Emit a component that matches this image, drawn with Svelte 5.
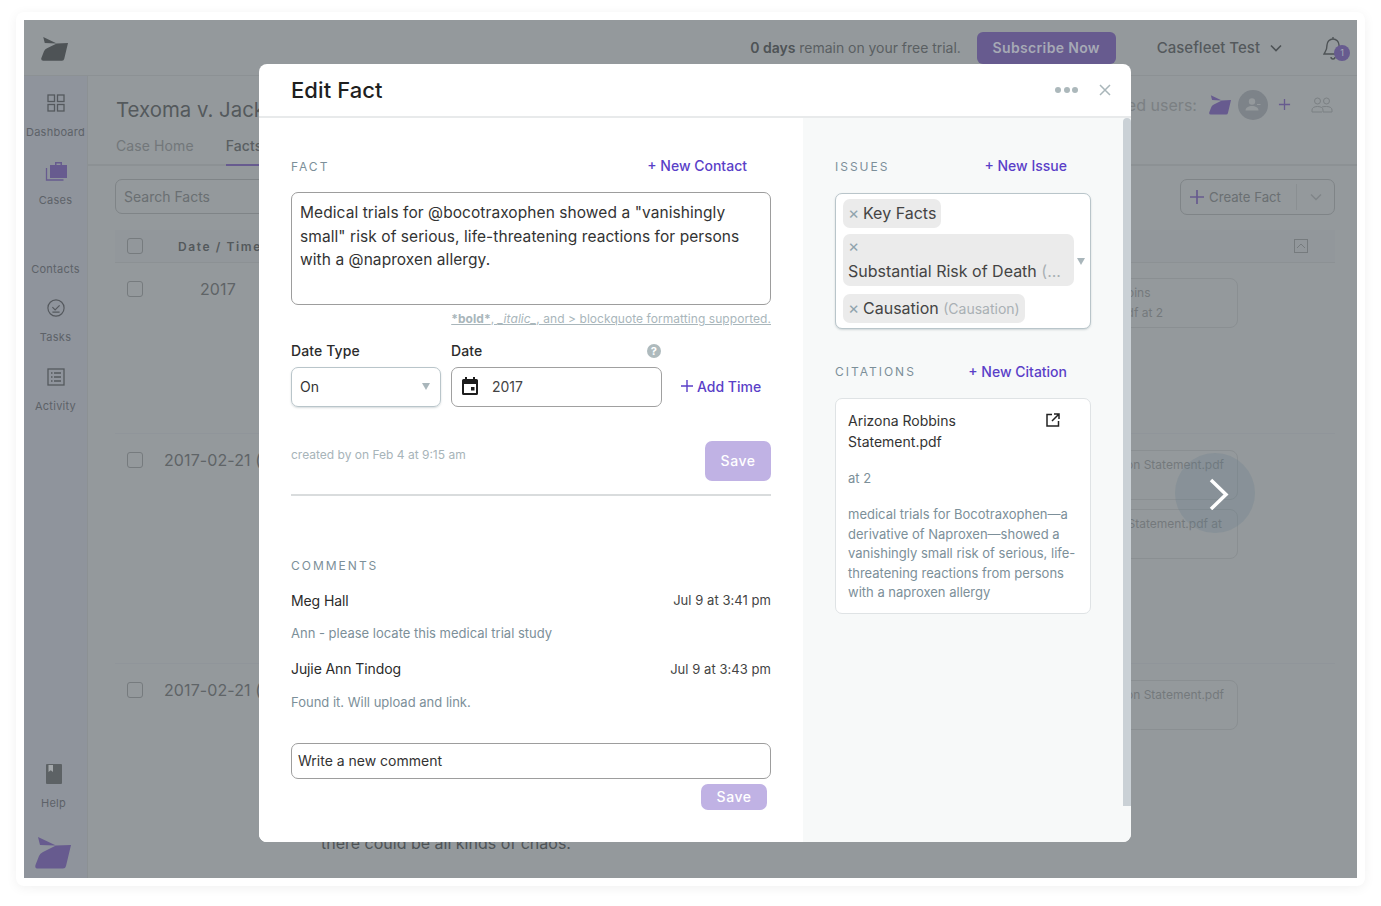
<script>
  const nav = [
    { label: 'Dashboard', icon: 'dash' },
    { label: 'Cases', icon: 'cases' },
    { label: 'Contacts', icon: 'none' },
    { label: 'Tasks', icon: 'tasks' },
    { label: 'Activity', icon: 'activity' }
  ];
  const rows = [
    { date: '2017', cls: 'r1', cards: [{ a: 'Arizona Robbins', b: 'Statement.pdf at 2' }] },
    { date: '2017-02-21 (', cls: 'r2', cards: [{ a: 'Jackson Statement.pdf', b: '' }, { a: 'Robbins Statement.pdf at', b: '' }] },
    { date: '2017-02-21 (', cls: 'r3', cards: [{ a: 'Jackson Statement.pdf', b: '' }] }
  ];
  const comments = [
    { who: 'Meg Hall', when: 'Jul 9 at 3:41 pm', text: 'Ann - please locate this medical trial study' },
    { who: 'Jujie Ann Tindog', when: 'Jul 9 at 3:43 pm', text: 'Found it. Will upload and link.' }
  ];
  const logo = 'M3 0 L21 8.500 L5 8 Z M21 8.500 L36 8 L31 29 Q30.500 31.500 28 31.500 H3 Q-.5 31.500 .5 28 L4 19 Q5 16.500 8 15 Z';
</script>

<div class="page">
  <div class="shell">
    <div class="frame">
      <header class="top">
        <svg class="toplogo" viewBox="0 0 36 32" aria-hidden="true"><path d={logo} /></svg>
        <div class="trial"><b>0 days</b> remain on your free trial.</div>
        <div class="subscribe">Subscribe Now</div>
        <div class="acct">Casefleet Test</div>
        <svg class="chev" viewBox="0 0 12 8" aria-hidden="true"><path d="M1 1.500 6 6.500 11 1.500" /></svg>
        <div class="bell">
          <svg viewBox="0 0 20 24" aria-hidden="true"><path d="M10 3a6 6 0 0 0-6 6c0 6-2 7-3 9h18c-1-2-3-3-3-9a6 6 0 0 0-6-6ZM10 1v2M8 21a2 2 0 0 0 4 0" /></svg>
          <span>1</span>
        </div>
      </header>
      <div class="under">
        <aside class="side">
          {#each nav as item}
            <div class="navitem">
              <div class="navicon">
                {#if item.icon === 'dash'}
                  <svg viewBox="0 0 18 18" aria-hidden="true" class="line"><rect x="1" y="1" width="6.500" height="6.500" /><rect x="10.500" y="1" width="6.500" height="6.500" /><rect x="1" y="10.500" width="6.500" height="6.500" /><rect x="10.500" y="10.500" width="6.500" height="6.500" /></svg>
                {:else if item.icon === 'cases'}
                  <svg viewBox="0 0 22 20" aria-hidden="true" class="case"><path d="M5 4h17v13H5z M10 4V1h7v3h-1.500V2.500h-4V4Z" /><path class="thin" d="M1.500 7v12h17" /></svg>
                {:else if item.icon === 'tasks'}
                  <svg viewBox="0 0 20 20" aria-hidden="true" class="line"><circle cx="10" cy="10" r="9" /><path d="M6 9l3 3 5-5M6 14.500h8" /></svg>
                {:else if item.icon === 'activity'}
                  <svg viewBox="0 0 18 18" aria-hidden="true" class="line"><rect x="1" y="1" width="16" height="16" /><path d="M4 5h1.500M7 5h7M4 9h1.500M7 9h7M4 13h1.500M7 13h7" /></svg>
                {/if}
              </div>
              <div class="navlabel">{item.label}</div>
            </div>
          {/each}
          <div class="spacer"></div>
          <div class="navitem help">
            <div class="navicon">
              <svg viewBox="0 0 16 20" aria-hidden="true"><path d="M1 0h14a1 1 0 0 1 1 1v18a1 1 0 0 1-1 1H1a1 1 0 0 1-1-1V1a1 1 0 0 1 1-1Z" fill="#5d6265" /><path d="M2.500 1h4.500v7L4.750 6.300 2.500 8Z" fill="#a3a7aa" /></svg>
            </div>
            <div class="navlabel">Help</div>
          </div>
          <svg class="sidelogo" viewBox="0 0 36 32" aria-hidden="true"><path d={logo} /></svg>
        </aside>
        <main class="content">
          <div class="casehead">
            <h1>Texoma v. Jackson</h1>
            <div class="shared">
              <span>Shared users:</span>
              <svg class="sharelogo" viewBox="0 0 36 32" aria-hidden="true"><path d={logo} /></svg>
              <div class="avatar">
                <svg viewBox="0 0 20 20" aria-hidden="true"><circle cx="9" cy="6.500" r="3.200" /><path d="M2.500 15.500c0-3 3-4.500 6.500-4.500s6.500 1.500 6.500 4.500Z" /><path d="M14 9h3.500v1H14Z" /></svg>
              </div>
              <svg class="shareplus" viewBox="0 0 14 14" aria-hidden="true"><path d="M7 1v12M1 7h12" /></svg>
              <svg class="shareusers" viewBox="0 0 22 16" aria-hidden="true"><circle cx="6.500" cy="4" r="3" /><circle cx="15.500" cy="4" r="3" /><path d="M1 15v-2c0-2 2-3.500 5.500-3.500S12 11 12 13v2M11 15h-10M11 10c1-.4 2.500-.5 4.500-.5 3.500 0 5.500 1.500 5.500 3.500v2H12" /></svg>
            </div>
          </div>
          <nav class="tabs">
            <span>Case Home</span>
            <span class="active">Facts</span>
          </nav>
          <div class="tools">
            <div class="search">Search Facts</div>
            <div class="create">
              <svg viewBox="0 0 14 14" aria-hidden="true"><path d="M7 0v14M0 7h14" /></svg>
              <span>Create Fact</span>
              <i></i>
              <svg class="cc" viewBox="0 0 12 8" aria-hidden="true"><path d="M1 1.500 6 6.500 11 1.500" /></svg>
            </div>
          </div>
          <div class="thead">
            <span class="check"></span>
            <span class="th">Date / Time</span>
            <svg class="collapse" viewBox="0 0 14 14" aria-hidden="true"><rect x=".5" y=".5" width="13" height="13" /><path d="M3 9l4-4 4 4" /></svg>
          </div>
          {#each rows as row}
            <div class="row {row.cls}">
              <span class="check"></span>
              <span class="date">{row.date}</span>
              <div class="cards">
                {#each row.cards as c}
                  <div class="refcard"><div>{c.a}</div><div>{c.b}</div></div>
                {/each}
              </div>
            </div>
          {/each}
          <div class="chaos">there could be all kinds of chaos.</div>
        </main>
      </div>
      <div class="nextbtn">
        <svg viewBox="0 0 20 32" aria-hidden="true"><path d="M2 2 17 16.500 2 31" /></svg>
      </div>
    </div>
  </div>

  <section class="modal">
    <div class="mhead">
      <h2>Edit Fact</h2>
      <div class="dots"><i></i><i></i><i></i></div>
      <svg class="close" viewBox="0 0 12 12" aria-hidden="true"><path d="M1 1l10 10M11 1 1 11" /></svg>
    </div>
    <div class="mbody">
      <div class="left">
        <div class="sechead"><span class="cap">FACT</span><span class="link">+ New Contact</span></div>
        <div class="factbox">Medical trials for @bocotraxophen showed a "vanishingly small" risk of serious, life-threatening reactions for persons with a @naproxen allergy.</div>
        <div class="hint"><b>*bold*</b>, <em>_italic_</em>, and &gt; blockquote formatting supported.</div>
        <div class="dategrid">
          <div class="lab">Date Type</div>
          <div class="lab datelab">Date <span class="q">?</span></div>
          <div></div>
          <div class="select">On<span class="tri"></span></div>
          <div class="dateinput">
            <svg viewBox="0 0 16 18" aria-hidden="true"><path fill-rule="evenodd" d="M3 0h2v2h6V0h2v2h1.500A1.500 1.500 0 0 1 16 3.500v13a1.500 1.500 0 0 1-1.500 1.500h-13A1.500 1.500 0 0 1 0 16.500v-13A1.500 1.500 0 0 1 1.500 2H3ZM2 7v9h12V7Zm7 3h3.500v3.500H9Z" /></svg>
            <span>2017</span>
          </div>
          <div class="addtime"><svg viewBox="0 0 12 12" aria-hidden="true"><path d="M6 0v12M0 6h12" /></svg>Add Time</div>
        </div>
        <div class="saverow">
          <span class="created">created by on Feb 4 at 9:15 am</span>
          <span class="save">Save</span>
        </div>
        <div class="divider"></div>
        <div class="cap comcap">COMMENTS</div>
        {#each comments as c}
          <div class="comment">
            <div class="chead"><span class="who">{c.who}</span><span class="when">{c.when}</span></div>
            <div class="ctext">{c.text}</div>
          </div>
        {/each}
        <div class="newcomment">Write a new comment</div>
        <div class="save2wrap"><span class="save2">Save</span></div>
      </div>
      <div class="right">
        <div class="sechead"><span class="cap">ISSUES</span><span class="link">+ New Issue</span></div>
        <div class="issues">
          <div class="tagcol">
            <div class="tag"><span class="x">×</span>Key Facts</div>
            <div class="tag tall"><span class="x">×</span><div class="tagline">Substantial Risk of Death <span class="muted">(...</span></div></div>
            <div class="tag third"><span class="x">×</span>Causation <span class="muted small">(Causation)</span></div>
          </div>
          <span class="tri issuetri"></span>
        </div>
        <div class="sechead cith"><span class="cap">CITATIONS</span><span class="link">+ New Citation</span></div>
        <div class="citation">
          <div class="citehead">
            <div class="citetitle">Arizona Robbins Statement.pdf</div>
            <svg viewBox="0 0 14 14" aria-hidden="true"><path d="M6 1.500H1v11.500h11.500V8M8 1h5v5M13 1 6 8" /></svg>
          </div>
          <div class="citeat">at 2</div>
          <div class="citetext">medical trials for Bocotraxophen—a derivative of Naproxen—showed a vanishingly small risk of serious, life-threatening reactions from persons with a naproxen allergy</div>
        </div>
      </div>
      <div class="scroll"></div>
    </div>
  </section>
</div>

<style>
  :global(body) { margin: 0; background: #fff; }
  .page { position: relative; width: 1381px; height: 906px; overflow: hidden; font-family: Inter, "Liberation Sans", sans-serif; background: #fff; }
  .shell { box-sizing: border-box; margin: 12px 16px 0; width: 1349px; height: 874px; padding: 8px; background: #fff; border-radius: 8px; box-shadow: 0 2px 12px rgba(0,0,0,.06); }
  .frame { position: relative; width: 1333px; height: 858px; background: #94999c; overflow: hidden; display: flex; flex-direction: column; color: #5a5f62; }
  .top { height: 55px; flex: none; display: flex; align-items: center; border-bottom: 1px solid #8c9194; padding-left: 17px; }
  .toplogo { width: 27px; height: 24px; fill: #4e5356; margin-top: 2px; }
  .trial { margin-left: auto; font-size: 14px; color: #5a5f62; letter-spacing: -.03px; }
  .trial b { font-weight: 600; color: #4e5356; }
  .subscribe { margin-left: 16px; width: 139px; height: 32px; line-height: 32px; text-align: center; background: #675b8f; color: #a6a9b5; border-radius: 6px; font-size: 14px; font-weight: 600; letter-spacing: .35px; }
  .acct { margin-left: 41px; font-size: 15px; font-weight: 500; color: #54595c; }
  .chev { width: 12px; height: 8px; margin-left: 10px; fill: none; stroke: #4e5356; stroke-width: 1.600; }
  .bell { position: relative; width: 20px; height: 24px; margin-left: 41px; margin-right: 14px; }
  .bell svg { width: 20px; height: 24px; fill: none; stroke: #4e5356; stroke-width: 1.400; }
  .bell span { position: absolute; left: 11px; top: 9px; width: 16px; height: 16px; border-radius: 50%; background: #675b8f; color: #a6a9b5; font-size: 9px; line-height: 16px; text-align: center; }
  .under { flex: 1; display: flex; min-height: 0; }
  .side { width: 63px; flex: none; background: #8f949c; border-right: 1px solid #8c9194; display: flex; flex-direction: column; align-items: center; padding-top: 16.500px; }
  .navitem { height: 68.500px; flex: none; display: flex; flex-direction: column; align-items: center; width: 100%; }
  .navicon { height: 20px; display: flex; align-items: center; justify-content: center; }
  .navicon svg { width: 18px; height: 18px; }
  .line { fill: none; stroke: #55595e; stroke-width: 1.300; }
  .case { width: 22px !important; height: 20px !important; fill: #675b8f; }
  .case .thin { fill: none; stroke: #675b8f; stroke-width: 1.300; }
  .navlabel { margin-top: 12px; font-size: 11px; line-height: 14px; letter-spacing: .25px; color: #5d6268; white-space: nowrap; }
  .spacer { flex: 1; }
  .help { height: auto; margin-bottom: 27px; margin-left: -4px; }
  .help .navicon svg { width: 16px; height: 20px; }
  .sidelogo { width: 36px; height: 32px; fill: #675b8f; margin: 0 0 9px -5px; flex: none; }
  .content { flex: 1; min-width: 0; position: relative; }
  .casehead { height: 55px; display: flex; align-items: center; justify-content: space-between; padding: 0 24px 0 28px; }
  .casehead h1 { margin: 0; font-size: 20.400px; font-weight: 400; color: #54595c; padding-top: 12px; }
  .shared { display: flex; align-items: center; padding-top: 2px; font-size: 16px; color: #7b8083; letter-spacing: .03px; }
  .sharelogo { width: 22px; height: 20px; fill: #675b8f; margin-left: 12px; }
  .avatar { width: 30px; height: 30px; border-radius: 50%; background: #7d8389; margin-left: 7px; margin-right: -1px; display: flex; align-items: center; justify-content: center; }
  .avatar svg { width: 20px; height: 20px; fill: #94999c; }
  .shareplus { width: 13px; height: 13px; margin-left: 11px; fill: none; stroke: #675b8f; stroke-width: 1.400; }
  .shareusers { width: 22px; height: 16px; margin-left: 20px; fill: none; stroke: #7b8083; stroke-width: 1; }
  .tabs { height: 33px; border-bottom: 2px solid #8c9194; display: flex; gap: 32px; padding-left: 28px; font-size: 14px; color: #72777a; letter-spacing: .1px; }
  .tabs span { height: 33px; line-height: 29px; }
  .tabs .active { color: #5a5f62; font-weight: 500; border-bottom: 2px solid #675b8f; }
  .tools { display: flex; justify-content: space-between; margin: 13px 22px 0 27px; }
  .search { width: 400px; height: 33px; line-height: 33px; padding-left: 8px; border: 1px solid #7f8487; border-radius: 7px; font-size: 14px; color: #6a6f72; }
  .create { width: 153px; height: 34px; border: 1px solid #7f8487; border-radius: 7px; display: flex; align-items: center; font-size: 13.200px; color: #6a6f72; }
  .create svg { width: 14px; height: 14px; margin-left: 9px; fill: none; stroke: #675b8f; stroke-width: 1.700; }
  .create span { margin-left: 5px; white-space: nowrap; }
  .create i { width: 1px; height: 26px; background: #8a8f92; margin-left: 15px; }
  .create .cc { width: 12px; height: 8px; margin-left: 13px; stroke: #7f8487; stroke-width: 1.300; }
  .thead { height: 32px; margin: 15px 22px 0 27px; background: #92979b; border-bottom: 1px solid #8c9194; display: flex; align-items: center; padding-left: 12px; position: relative; }
  .th { margin-left: 35px; font-size: 12px; font-weight: 600; letter-spacing: 1.600px; color: #54595c; }
  .collapse { position: absolute; right: 27px; top: 9px; width: 14px; height: 14px; fill: none; stroke: #767b7e; stroke-width: 1; }
  .check { width: 14px; height: 14px; border: 1px solid #767b7e; border-radius: 3px; flex: none; }
  .row { margin: 0 22px 0 27px; display: flex; align-items: flex-start; padding-left: 12px; position: relative; border-bottom: 1px solid #90959a; box-sizing: border-box; }
  .r1 { height: 171px; padding-top: 18px; }
  .r2 { height: 230px; padding-top: 18px; }
  .r3 { height: 160px; padding-top: 18px; border-bottom: 0; }
  .r1 .date { margin-left: 57px; }
  .date { margin-left: 21px; font-size: 16px; line-height: 20px; color: #5f6467; white-space: nowrap; margin-top: -2px; letter-spacing: .1px; }
  .cards { position: absolute; left: 929px; width: 194px; top: 16px; display: flex; flex-direction: column; gap: 9px; }
  .r1 .cards { top: 15px; }
  .refcard { box-sizing: border-box; height: 50px; border: 1px solid #8a8f92; border-radius: 8px; padding: 4px 13px 0; font-size: 12px; line-height: 20px; color: #74797c; white-space: nowrap; }
  .r2 .refcard, .r3 .refcard { text-align: right; }
  .r2 .refcard + .refcard { padding-right: 15px; }
  .chaos { position: absolute; left: 233px; top: 757px; font-size: 16px; color: #4e5356; }
  .nextbtn { position: absolute; left: 1151px; top: 433px; width: 80px; height: 80px; border-radius: 50%; background: rgba(100,125,140,.25); display: flex; align-items: center; justify-content: center; }
  .nextbtn svg { width: 20px; height: 32px; fill: none; stroke: #fff; stroke-width: 3.500; margin-left: 7px; margin-top: 1px; }

  .modal { position: absolute; left: 259px; top: 64px; width: 872px; height: 778px; background: #fff; border-radius: 8px; overflow: hidden; display: flex; flex-direction: column; color: #2d2d2d; }
  .mhead { height: 52px; flex: none; display: flex; align-items: center; padding: 0 20px 0 32px; border-bottom: 2px solid #e8eaeb; }
  .mhead h2 { margin: 0; font-size: 22px; font-weight: 500; color: #1f1f1f; letter-spacing: .08px; }
  .dots { margin-left: auto; display: flex; gap: 2.500px; }
  .dots i { width: 6px; height: 6px; border-radius: 50%; background: #acb8bb; }
  .close { width: 12px; height: 12px; margin-left: 21px; fill: none; stroke: #a9b6ba; stroke-width: 1.500; }
  .mbody { flex: 1; display: flex; min-height: 0; background: #f7f9f9; }
  .left { width: 480px; flex: none; padding: 0 32px; background: #fff; }
  .right { width: 256px; flex: none; background: #f7f9f9; padding: 0 32px; }
  .scroll { flex: none; width: 8px; background: #cad1d6; border-radius: 4px 4px 0 0; height: 688px; }
  .sechead { display: flex; justify-content: space-between; align-items: center; height: 20px; margin-top: 37px; padding-right: 24px; }
  .cap { font-size: 12px; letter-spacing: 2px; color: #7c8f99; margin-top: 2px; }
  .cith .cap { margin-top: 0; }
  .link { font-size: 14px; font-weight: 500; color: #5a3fc8; }
  .factbox { box-sizing: border-box; margin-top: 17px; height: 113px; border: 1px solid #9d9d9d; border-radius: 7px; padding: 8px; font-size: 15.500px; line-height: 23.500px; color: #333; letter-spacing: .07px; }
  .hint { margin-top: 6px; text-align: right; font-size: 12px; line-height: 16px; color: #a9b6bb; text-decoration: underline; letter-spacing: .06px; }
  .hint b { font-weight: 700; }
  .dategrid { display: grid; grid-template-columns: 150px 211px 1fr; column-gap: 10px; margin-top: 15px; }
  .lab { font-size: 14px; font-weight: 500; line-height: 18px; color: #2b2b2b; padding-bottom: 7px; letter-spacing: .1px; }
  .datelab { display: flex; justify-content: space-between; align-items: center; }
  .q { width: 14px; height: 14px; border-radius: 50%; background: #aebabd; color: #fff; font-size: 11px; font-weight: 700; line-height: 14px; text-align: center; margin-right: 1px; }
  .select { box-sizing: border-box; height: 40px; border: 1px solid #b9c5ca; border-radius: 7px; padding-left: 8px; line-height: 37px; font-size: 14px; color: #333; position: relative; box-shadow: 0 1px 2px rgba(90,110,120,.25); }
  .tri { position: absolute; right: 10px; top: 15px; width: 0; height: 0; border-left: 4.500px solid transparent; border-right: 4.500px solid transparent; border-top: 7px solid #a9b6bb; }
  .dateinput { box-sizing: border-box; height: 40px; border: 1px solid #a0a0a0; border-radius: 7px; display: flex; align-items: center; padding-left: 10px; padding-bottom: 2px; font-size: 14px; color: #444; }
  .dateinput svg { width: 16px; height: 18px; fill: #1d1d1d; }
  .dateinput span { margin-left: 14px; }
  .addtime { box-sizing: border-box; display: flex; align-items: center; height: 40px; padding-left: 9px; padding-bottom: 2px; font-size: 14px; font-weight: 500; color: #5a3fc8; white-space: nowrap; }
  .addtime svg { width: 12px; height: 12px; margin-right: 4px; fill: none; stroke: #5a3fc8; stroke-width: 1.400; }
  .saverow { display: flex; justify-content: space-between; align-items: flex-start; margin-top: 34px; }
  .created { font-size: 12px; line-height: 16px; color: #a7b4b9; margin-top: 6px; }
  .save { width: 66px; height: 40px; border-radius: 7px; background: #c0b2e4; color: #fff; font-size: 14px; font-weight: 500; line-height: 40px; text-align: center; letter-spacing: .5px; }
  .divider { height: 2px; background: #d9dcdd; margin-top: 13px; }
  .cap.comcap { margin-top: 62px; line-height: 16px; }
  .comment { height: 68.500px; }
  .chead { display: flex; justify-content: space-between; align-items: center; height: 20px; padding-top: 16px; }
  .who { font-size: 14px; color: #2b2b2b; letter-spacing: -.1px; }
  .when { font-size: 13px; color: #444; letter-spacing: .05px; }
  .ctext { font-size: 13px; line-height: 16px; margin-top: 15px; color: #7c8f99; }
  .newcomment { box-sizing: border-box; height: 36px; margin-top: 32px; border: 1px solid #9d9d9d; border-radius: 7px; line-height: 34px; padding-left: 6px; font-size: 14px; color: #333; }
  .save2wrap { display: flex; justify-content: flex-end; padding-right: 4px; margin-top: 5px; }
  .save2 { width: 66px; height: 26px; border-radius: 7px; background: #c0b2e4; color: #fff; font-size: 14px; font-weight: 500; line-height: 26px; text-align: center; letter-spacing: .5px; }
  .issues { box-sizing: border-box; position: relative; margin-top: 18px; height: 136px; background: #fff; border: 1px solid #b9c5ca; border-radius: 7px; box-shadow: 0 1px 2px rgba(90,110,120,.25); padding: 5px 16px 0 7px; }
  .tagcol { display: flex; flex-direction: column; align-items: flex-start; gap: 6px; }
  .tag { background: #ebebeb; border-radius: 7px; font-size: 16px; color: #444; line-height: 29px; padding: 0 5px; white-space: nowrap; }
  .tag.tall { width: 231px; box-sizing: border-box; height: 52px; line-height: 22px; padding: 1px 5px 0; }
  .tag.third { margin-top: 2px; }
  .x { display: inline-block; width: 15px; font-size: 17px; color: #8fa3ad; }
  .tagline { margin-top: 3px; }
  .muted { color: #a9b0b4; }
  .small { font-size: 14px; }
  .issuetri { right: 5px; top: 64px; }
  .sechead.cith { margin-top: 32px; }
  .citation { box-sizing: border-box; margin-top: 17px; height: 216px; background: #fff; border: 1px solid #dfe3e5; border-radius: 7px; padding: 11px 12px 12px; }
  .citehead { display: flex; justify-content: space-between; align-items: flex-start; padding-right: 18px; }
  .citetitle { width: 130px; font-size: 14px; line-height: 21px; color: #333; }
  .citehead svg { width: 14px; height: 14px; margin-top: 3px; fill: none; stroke: #222; stroke-width: 1.500; }
  .citeat { margin-top: 18px; font-size: 13px; line-height: 16px; color: #7c8f99; }
  .citetext { margin-top: 19px; font-size: 13px; line-height: 19.500px; color: #7c8f99; }
</style>
